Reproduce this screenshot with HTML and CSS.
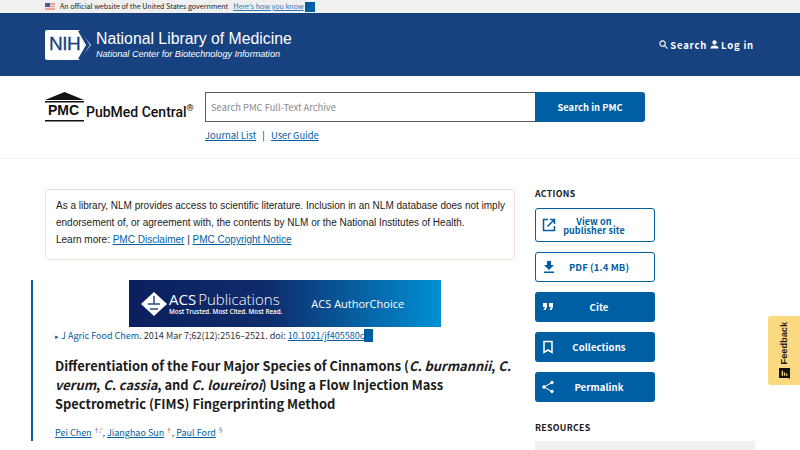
FILE: index.html
```html
<!DOCTYPE html>
<html lang="en">
<head>
    <meta charset="UTF-8">
    <meta name="viewport" content="width=device-width, initial-scale=1.0">
    <title>PMC article</title>
    <link rel="stylesheet" href="styles.css">
</head>
<body>
    <div class="gov-banner">
        <svg class="flag" width="10" height="7" viewBox="0 0 10 7">
            <rect width="10" height="7" fill="#e9a49b"/>
            <rect y="2" width="10" height="1" fill="#f4dcd8"/>
            <rect y="4" width="10" height="1" fill="#f4dcd8"/>
            <rect width="5" height="4" fill="#4a5a9a"/>
        </svg>
        <span class="gov-text">An official website of the United States government</span>
        <a class="gov-link" href="#">Here's how you know</a>
        <span class="blue-box gov-box"></span>
    </div>

    <header class="nih-header">
        <div class="nih-brand">
            <svg class="nih-logo" width="46" height="30" viewBox="0 0 46 30">
                <path d="M2 0H31L34 0L46 15L34 30H2Q0 30 0 28V2Q0 0 2 0Z" fill="#fff"/>
                <path d="M33 1H36L45 15L36 29H33L41 15Z" fill="#18427f"/>
            </svg>
            <span class="nih-letters">NIH</span>
            <div class="nih-titles">
                <div class="nih-title">National Library of Medicine</div>
                <div class="nih-sub">National Center for Biotechnology Information</div>
            </div>
        </div>
        <nav class="nih-nav">
            <a class="nih-nav-item" href="#">
                <svg width="9" height="9" viewBox="0 0 10 10" fill="none" stroke="#fff" stroke-width="1.2"><circle cx="4" cy="4" r="3"/><path d="M6.2 6.2L9.5 9.5"/></svg>
                Search
            </a>
            <a class="nih-nav-item" href="#">
                <svg width="9" height="9" viewBox="0 0 10 10" fill="#fff"><circle cx="5" cy="2.8" r="2.4"/><path d="M0.5 9.5Q0.5 6 5 6T9.5 9.5Z"/></svg>
                Log in
            </a>
        </nav>
    </header>

    <section class="search-band">
        <div class="pmc-brand">
            <svg class="pmc-logo" width="39" height="30" viewBox="0 0 39 30">
                <path d="M0 8L19.500 0L39 8Z" fill="#111"/>
                <rect y="9" width="39" height="1.500" fill="#111"/>
                <rect y="28" width="39" height="1.500" fill="#111"/>
            </svg>
            <span class="pmc-letters">PMC</span>
            <span class="pmc-name">PubMed Central<sup>®</sup></span>
        </div>
        <div class="search-col">
            <form class="search-form">
                <input class="search-input" type="text" placeholder="Search PMC Full-Text Archive">
                <button class="search-btn" type="button">Search in PMC</button>
            </form>
            <div class="search-links">
                <a href="#">Journal List</a>
                <span class="sep">|</span>
                <a href="#">User Guide</a>
            </div>
        </div>
    </section>

    <main class="page">
        <div class="content">
            <div class="notice">
                As a library, NLM provides access to scientific literature. Inclusion in an NLM database does not imply endorsement of, or agreement with, the contents by NLM or the National Institutes of Health.<br>
                Learn more: <a href="#">PMC Disclaimer</a> | <a href="#">PMC Copyright Notice</a>
            </div>
            <article class="article">
                <div class="acs-banner">
                    <svg width="26" height="26" viewBox="2 0 26 26" class="acs-mark">
                        <path d="M15 1L28 13L15 25L2 13Z" fill="#fff"/>
                        <path d="M15 5L15 13M9 13L21 13M11 18L19 18" stroke="#2b4a80" stroke-width="1.500"/>
                    </svg>
                    <div class="acs-words">
                        <div class="acs-name">ACS<span class="acs-pub">Publications</span></div>
                        <div class="acs-tag">Most Trusted. Most Cited. Most Read.</div>
                    </div>
                    <div class="acs-choice">ACS AuthorChoice</div>
                </div>
                <div class="citation">
                    <span class="arrow">▸</span> <a class="plain" href="#">J Agric Food Chem</a>. 2014 Mar 7;62(12):2516–2521. doi: <a href="#">10.1021/jf405580c</a><span class="blue-box cite-box"></span>
                </div>
                <h1 class="title">Differentiation of the Four Major Species of Cinnamons (<i>C. burmannii</i>, <i>C. verum</i>, <i>C. cassia</i>, and <i>C. loureiroi</i>) Using a Flow Injection Mass Spectrometric (FIMS) Fingerprinting Method</h1>
                <div class="authors">
                    <a href="#">Pei Chen</a> <sup>†,*</sup>, <a href="#">Jianghao Sun</a> <sup>†</sup>, <a href="#">Paul Ford</a> <sup>§</sup>
                </div>
            </article>
        </div>
        <aside class="side">
            <h2 class="side-head">ACTIONS</h2>
            <a class="action outline two-line" href="#">
                <svg width="14" height="14" viewBox="0 0 14 14" fill="none" stroke="#005ea2" stroke-width="1.500"><path d="M6 1.500H1.500V12.500H12.500V8M5.500 8.500L12.500 1.500M8 1.500H12.500V6"/></svg>
                <span>View on<br>publisher site</span>
            </a>
            <a class="action outline" href="#">
                <svg width="14" height="14" viewBox="0 0 14 14" fill="#005ea2"><path d="M5 1H9V5H12L7 10L2 5H5ZM2 11.500H12V13H2Z"/></svg>
                <span>PDF (1.4 MB)</span>
            </a>
            <a class="action solid" href="#">
                <svg width="14" height="14" viewBox="0 0 14 14" fill="#fff"><path d="M2 3H6V7L4.500 10H2.500L4 7H2ZM8 3H12V7L10.500 10H8.500L10 7H8Z"/></svg>
                <span>Cite</span>
            </a>
            <a class="action solid" href="#">
                <svg width="14" height="14" viewBox="0 0 14 14" fill="none" stroke="#fff" stroke-width="1.500"><path d="M3 1.500H11V12.500L7 10L3 12.500Z"/></svg>
                <span>Collections</span>
            </a>
            <a class="action solid" href="#">
                <svg width="14" height="14" viewBox="0 0 14 14" fill="#fff" stroke="#fff"><path d="M11 2.500L3 7L11 11.500" fill="none"/><circle cx="11" cy="2.500" r="1.300"/><circle cx="3" cy="7" r="1.300"/><circle cx="11" cy="11.500" r="1.300"/></svg>
                <span>Permalink</span>
            </a>
            <h2 class="side-head resources">RESOURCES</h2>
            <div class="resource-bar"></div>
        </aside>
    </main>

    <a class="feedback" href="#">
        <span>Feedback</span>
        <svg width="11" height="11" viewBox="0 0 10 10"><path d="M0 0H10V10L8.500 9H0Z" fill="#111"/><path d="M3 2.500V7M5 4V7M7 5V7" stroke="#fad980" stroke-width="1.200"/></svg>
    </a>
</body>
</html>
```

FILE: styles.css
```css
html{
    box-sizing: border-box;
    font-family: "Noto Sans CJK SC", "Source Sans Pro", sans-serif;
    font-size: 16px;
}
*,
*::after,
*::before{
    box-sizing: inherit;
}
body{
    margin: 0;
    height: 450px;
    overflow: hidden;
    position: relative;
    background-color: #fff;
    color: #1b1b1b;
}
a{
    color: #005ea2;
}
.blue-box{
    display: inline-block;
    background-color: #005ea2;
}
.gov-banner{
    height: 13px;
    padding-left: 45px;
    display: flex;
    align-items: center;
    background-color: #f0f0f0;
    font-size: 7.1px;
    line-height: 13px;
}
.flag{
    margin-right: 5px;
}
.gov-text{
    margin-right: 5px;
}
.gov-link{
    color: #2a7ab8;
}
.gov-box{
    width: 10px;
    height: 10px;
    margin-left: 1px;
}
.nih-header{
    height: 63px;
    padding: 0 46px 0 45px;
    display: flex;
    align-items: center;
    justify-content: space-between;
    background-color: #18427f;
    color: #fff;
}
.nih-brand{
    display: flex;
    align-items: center;
    position: relative;
}
.nih-logo{
    margin-right: 5px;
}
.nih-letters{
    position: absolute;
    left: 4px;
    top: 4px;
    color: #18427f;
    font-family: "Liberation Sans", sans-serif;
    font-size: 19px;
    line-height: 22px;
    letter-spacing: -.5px;
    -webkit-text-stroke: .3px #18427f;
}
.nih-title{
    font-family: "Liberation Sans", sans-serif;
    font-size: 15.8px;
    line-height: 18px;
    margin-top: 1px;
}
.nih-sub{
    font-family: "Liberation Sans", sans-serif;
    font-size: 9.1px;
    font-style: italic;
    line-height: 12px;
}
.nih-nav{
    display: flex;
    gap: 3px;
}
.nih-nav-item{
    display: flex;
    align-items: center;
    gap: 2px;
    color: #fff;
    font-size: 9.5px;
    font-weight: 700;
    letter-spacing: .8px;
    text-decoration: none;
}
.search-band{
    height: 83px;
    padding: 16px 0 0 45px;
    display: flex;
    border-bottom: 1px solid #f0f0f0;
}
.pmc-brand{
    width: 160px;
    height: 30px;
    display: flex;
    align-items: flex-end;
    position: relative;
}
.pmc-logo{
    margin-right: 2px;
    flex-shrink: 0;
}
.pmc-letters{
    position: absolute;
    left: 3px;
    top: 9px;
    font-family: "Liberation Sans", sans-serif;
    font-size: 14px;
    line-height: 19px;
    font-weight: 700;
    color: #111;
}
.pmc-name{
    font-family: Roboto, sans-serif;
    font-size: 14px;
    font-weight: 500;
    line-height: 18px;
    margin-bottom: 1px;
    white-space: nowrap;
    color: #111;
}
.pmc-name sup{
    font-size: 9px;
    line-height: 0;
}
.search-form{
    display: flex;
    width: 440px;
    height: 30px;
}
.search-input{
    width: 330px;
    height: 30px;
    padding: 0 5px;
    border: 1px solid #565c65;
    border-right: 0;
    border-radius: 0;
    font-family: inherit;
    font-size: 9.4px;
    outline: none;
}
.search-input::placeholder{
    color: #8a8a8a;
    opacity: 1;
}
.search-btn{
    width: 110px;
    height: 30px;
    border: 0;
    border-radius: 0 3px 3px 0;
    background-color: #005ea2;
    color: #fff;
    font-family: inherit;
    font-size: 9.4px;
    font-weight: 700;
}
.search-links{
    margin-top: 4px;
    font-size: 9.4px;
    line-height: 18px;
}
.sep{
    margin: 0 4px;
}
.page{
    padding: 30px 45px 0;
    display: flex;
    gap: 20px;
}
.content{
    width: 470px;
    flex-shrink: 0;
}
.notice{
    height: 71px;
    padding: 7px 6px 7px 10px;
    border: 1px solid #f2ded6;
    border-radius: 3px;
    font-family: "Liberation Sans", sans-serif;
    font-size: 10px;
    line-height: 17px;
}
.article{
    margin: 20px 0 0 -14px;
    padding-left: 22px;
    border-left: 2px solid #005ea2;
}
.acs-banner{
    width: 312px;
    height: 47px;
    margin-left: 74px;
    padding-left: 12px;
    display: flex;
    align-items: center;
    background: linear-gradient(90deg, #0b1f5e, #0e2c6c 45%, #0090d4);
    color: #fff;
}
.acs-mark{
    margin-right: 2px;
}
.acs-name{
    font-family: "Open Sans", sans-serif;
    font-size: 15px;
    line-height: 17px;
}
.acs-pub{
    font-weight: 300;
    margin-left: 2px;
}
.acs-tag{
    font-family: "Open Sans", sans-serif;
    font-size: 6.3px;
    font-weight: 600;
    line-height: 8px;
}
.acs-choice{
    margin-left: 29px;
    font-family: "Open Sans", sans-serif;
    font-size: 11px;
}
.citation{
    margin-top: 2px;
    font-size: 9.05px;
    line-height: 14px;
    color: #333;
    display: block;
}
.arrow{
    font-size: 7px;
    color: #005ea2;
}
.plain{
    text-decoration: none;
}
.cite-box{
    width: 9px;
    height: 13px;
    vertical-align: -3px;
}
.title{
    margin: 13px 0 0;
    font-size: 12.9px;
    font-weight: 700;
    line-height: 19px;
    color: #1b1b1b;
}
.authors{
    margin-top: 12px;
    font-size: 9px;
    line-height: 16px;
    color: #555;
}
.authors sup{
    font-size: 5.5px;
    line-height: 0;
}
.side{
    width: 220px;
    flex-shrink: 0;
    margin-top: -1px;
}
.side-head{
    margin: 0 0 8px;
    font-size: 8.8px;
    font-weight: 700;
    line-height: 12px;
    letter-spacing: .3px;
    color: #1b1b1b;
}
.action{
    width: 120px;
    height: 30px;
    margin-bottom: 10px;
    padding-left: 6px;
    display: flex;
    align-items: center;
    border-radius: 3px;
    font-size: 9.5px;
    font-weight: 700;
    line-height: 9px;
    letter-spacing: .1px;
    text-decoration: none;
}
.action.two-line{
    height: 34px;
    font-size: 9px;
}
.action span{
    flex: 1;
    padding-right: 12px;
    text-align: center;
}
.action.two-line span{
    padding: 1px 22px 0 0;
}
.action.outline{
    border: 1px solid #005ea2;
    color: #005ea2;
    background-color: #fff;
}
.action.solid{
    background-color: #005ea2;
    color: #fff;
}
.side-head.resources{
    margin: 20px 0 7px;
}
.resource-bar{
    height: 10px;
    background-color: #f0f0f0;
}
.feedback{
    position: absolute;
    right: 0;
    top: 316px;
    width: 32px;
    height: 69px;
    padding: 6px 0 6px;
    display: flex;
    flex-direction: column;
    align-items: center;
    justify-content: space-between;
    background-color: #fad980;
    border-radius: 3px 0 0 3px;
    color: #1b1b1b;
    text-decoration: none;
    font-family: "Liberation Sans", sans-serif;
    font-size: 9.2px;
    font-weight: 700;
}
.feedback span{
    writing-mode: vertical-rl;
    transform: rotate(180deg);
}
```
